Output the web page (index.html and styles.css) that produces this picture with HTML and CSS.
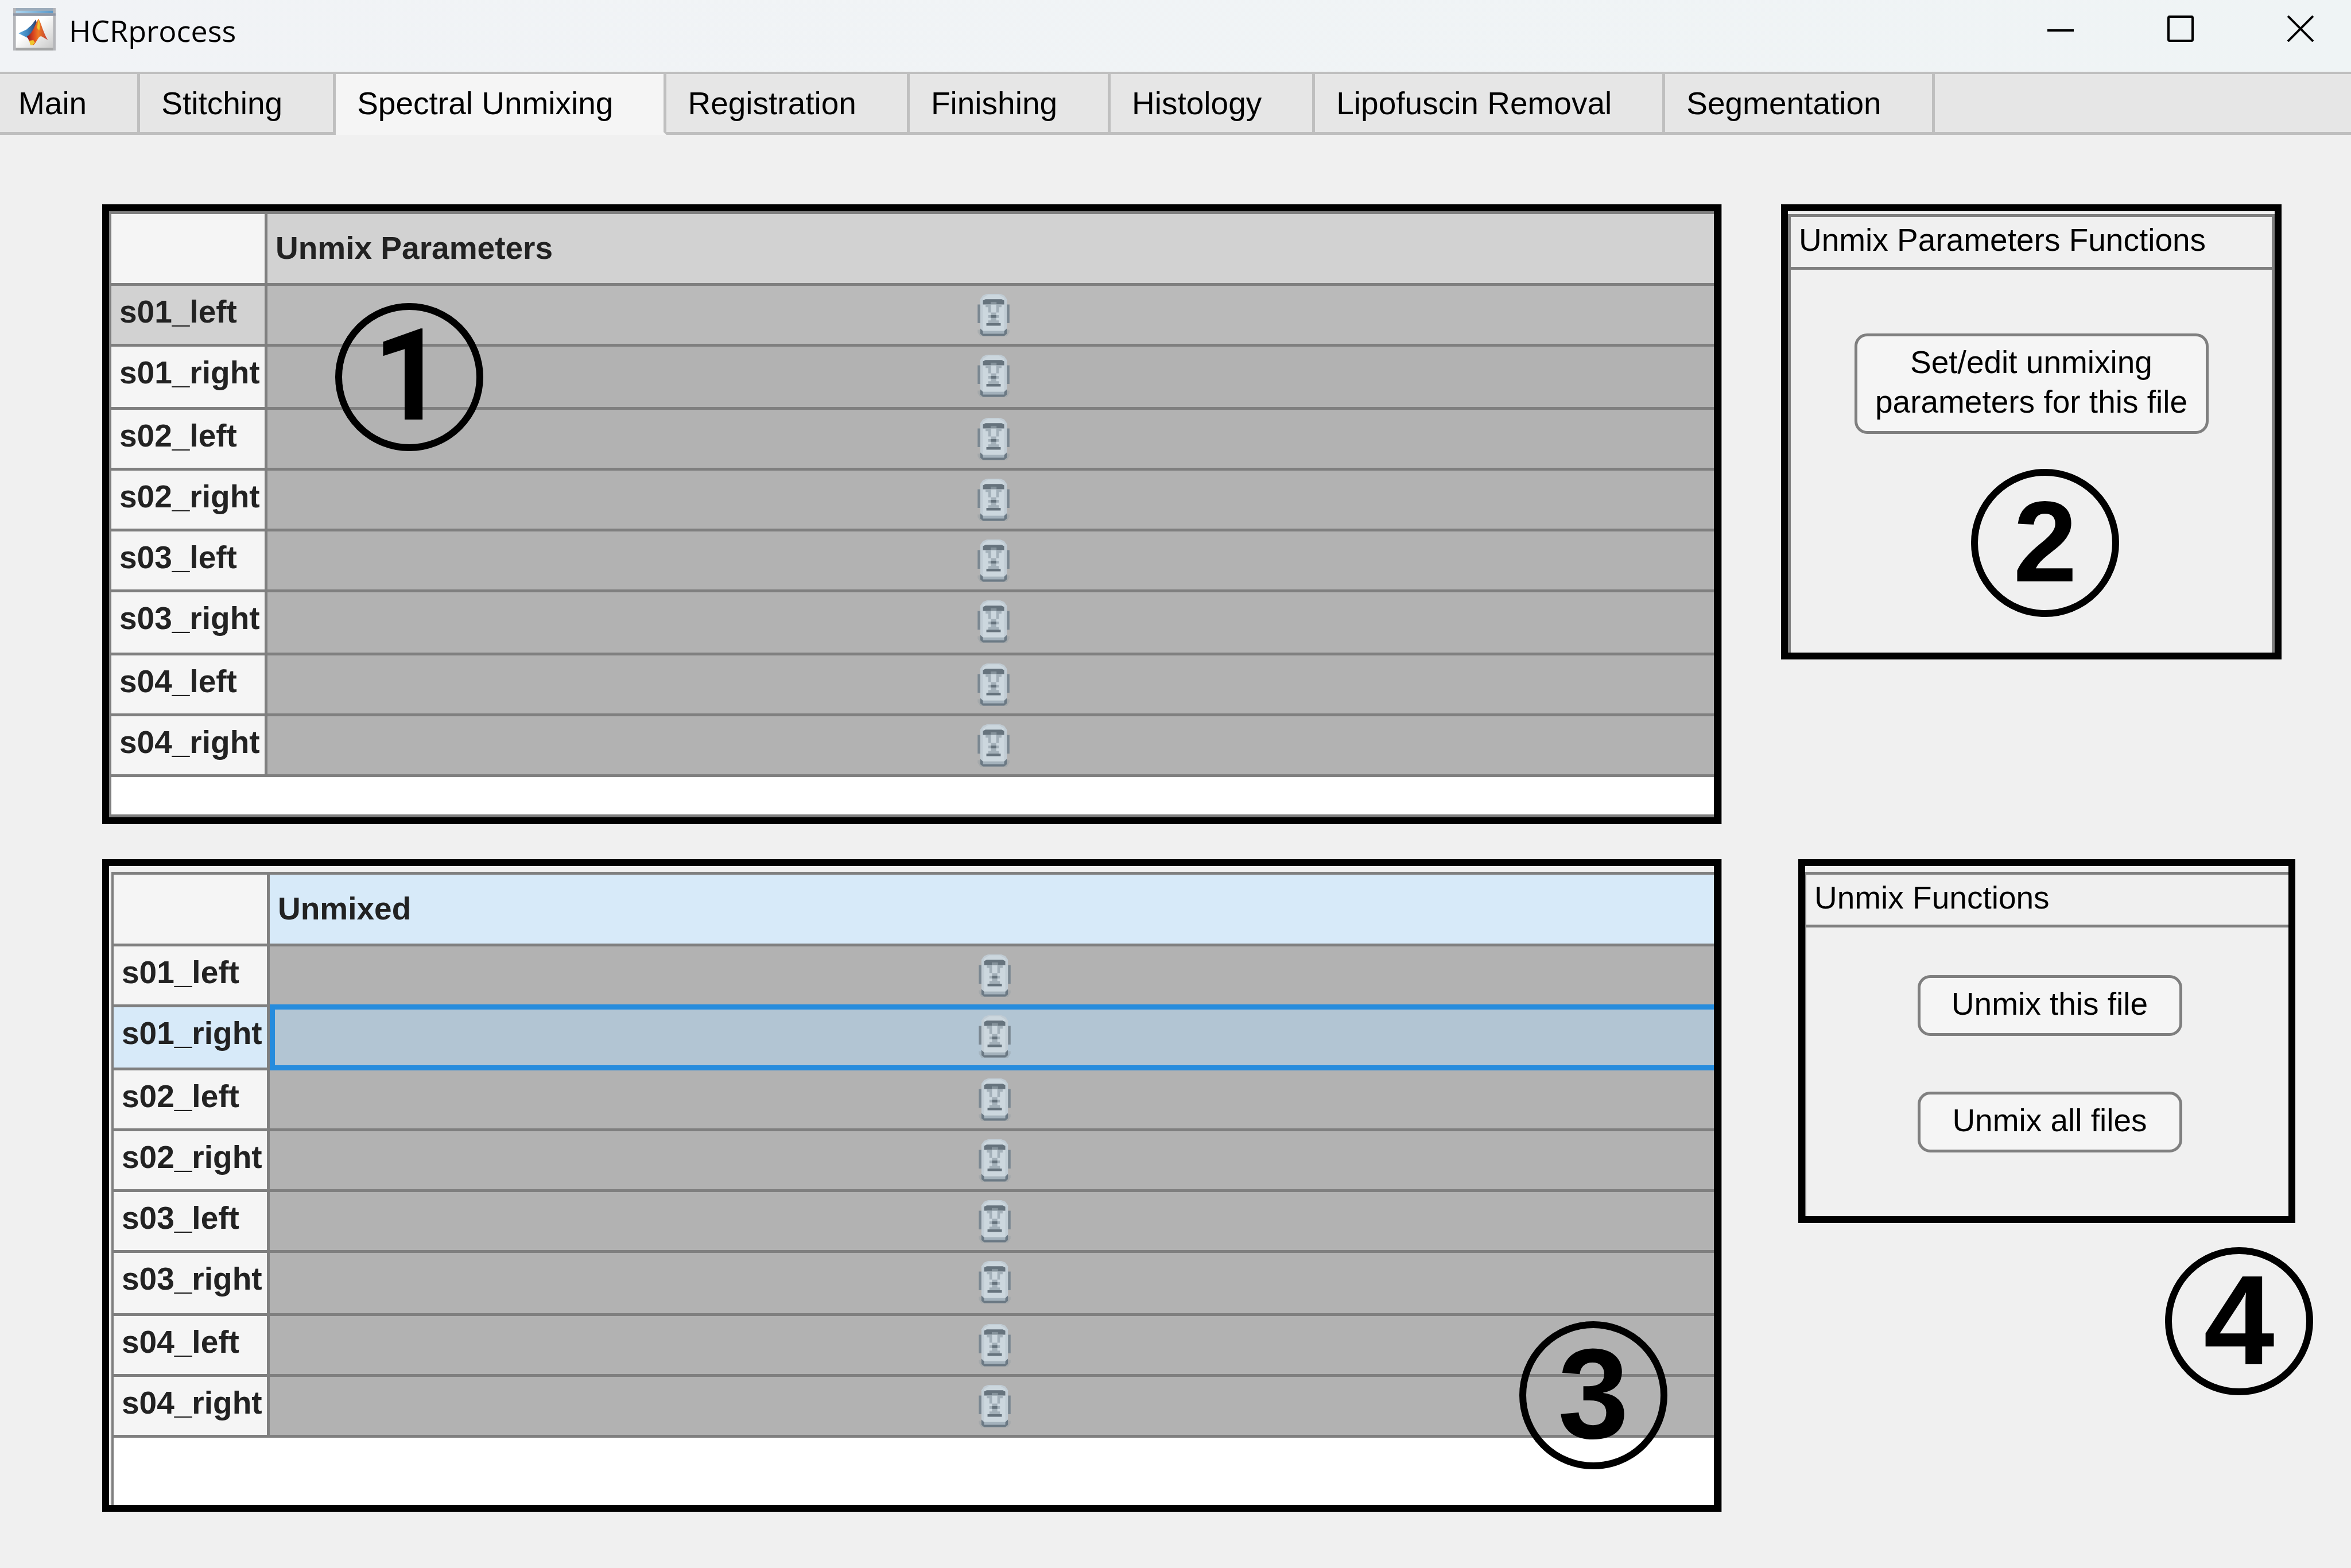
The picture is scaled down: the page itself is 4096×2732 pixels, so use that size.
FILE: index.html
```html
<!DOCTYPE html>
<html lang="en">
<head>
<meta charset="utf-8">
<title>HCRprocess</title>
<link rel="stylesheet" href="styles.css">
</head>
<body>
<svg class="defs" aria-hidden="true">
  <symbol id="moai" viewBox="0 0 12 16">
    <path fill="#7a8791" d="M0 4h1v7H0zM11 4h1v7h-1z"/>
    <path fill="#8c979f" d="M0 13.5h12v1l-1 1.5H1l-1-1.5z" opacity=".35"/>
    <path fill="#6b7984" d="M1 13h10v2l-1 .9H2L1 15z"/>
    <path fill="#c1ccd4" d="M1 2L2 .6 3.500 0h5L10 .6 11 2v11l-1 1H2l-1-1z"/>
    <path fill="#ccd7de" d="M2 1.500L4 .3h4l2 1.200V14H2z"/>
    <path fill="#a4b2bc" d="M2 14h8v1H2z"/>
    <path fill="#66737d" d="M2 2.500L3 2h6l1 .5V4H7V3H5v1H2z"/>
    <path fill="#85929b" d="M5 3h2v1H5z"/>
    <path fill="#a3b0b9" d="M3 4h2v2H4v-1H3zM7 4h2v1H8v2H7zM4 6h1v1H4zM5 7h2v1H5zM4 8h4v1H4zM5 9h2v1h1v1H4v-1h1z"/>
    <path fill="#66737d" d="M5 8h2v1H5zM3.300 11h5.400v1H3.300z"/>
  </symbol>
</svg>

<header class="titlebar">
  <svg class="app-icon" viewBox="0 0 16 16" aria-hidden="true">
    <defs>
      <linearGradient id="bar"><stop offset="0" stop-color="#add6f0"/><stop offset="1" stop-color="#5b98c8"/></linearGradient>
      <linearGradient id="paper" x2="1" y2="1"><stop offset=".4" stop-color="#fff"/><stop offset="1" stop-color="#cacaca"/></linearGradient>
      <linearGradient id="sea"><stop offset="0" stop-color="#5faae0"/><stop offset=".5" stop-color="#3d84bd"/><stop offset="1" stop-color="#303a66"/></linearGradient>
      <linearGradient id="flame"><stop offset="0" stop-color="#8d1820"/><stop offset=".3" stop-color="#d8431f"/><stop offset=".55" stop-color="#ee7a25"/><stop offset="1" stop-color="#bf3a35"/></linearGradient>
    </defs>
    <path fill="#b5b6ba" d="M0 0h16v16H0z"/>
    <path fill="#9cabba" d="M1 0h14v1H1z"/>
    <path fill="url(#bar)" d="M1 1h14v1H1z"/>
    <path fill="#8f97a6" d="M0 2h16v.9H0z"/>
    <path fill="url(#paper)" d="M1 3h14v12H1z"/>
    <path fill="#a4a5a6" d="M1 15h14v1H1z"/>
    <path fill="url(#sea)" d="M2 9.500l3-1.400 2-1.800 1.500-2L9 6l-2 4.500-1.500.8z"/>
    <path fill="url(#flame)" d="M9.500 4c1 1.500 1.700 5 3.500 8l-2.500-1.400c-1.300.2-1.900 3-3 3.400L6 12.300l-.8-1.600C7.500 9.500 8 6.500 9.500 4z"/>
    <path fill="#eec62e" d="M9.400 4.400c.8 1 .8 2.800.4 4.100L9 7.500zM6 12.300l1.600-.2.600.9-.8 1H6.500z"/>
  </svg>
  <h1 class="app-name">HCRprocess</h1>
  <div class="window-controls">
    <button class="control" aria-label="Minimize"><svg viewBox="0 0 46 46"><path d="M0 26h46"/></svg></button>
    <button class="control" aria-label="Maximize"><svg viewBox="0 0 46 46"><rect x="2" y="2" width="42" height="42" rx="2"/></svg></button>
    <button class="control" aria-label="Close"><svg viewBox="0 0 46 46"><path d="M1 1l44 44M45 1L1 45"/></svg></button>
  </div>
</header>

<nav class="tabs" role="tablist">
  <button class="tab" role="tab">Main</button>
  <button class="tab" role="tab">Stitching</button>
  <button class="tab is-active" role="tab" aria-selected="true">Spectral Unmixing</button>
  <button class="tab" role="tab">Registration</button>
  <button class="tab" role="tab">Finishing</button>
  <button class="tab" role="tab">Histology</button>
  <button class="tab" role="tab">Lipofuscin Removal</button>
  <button class="tab" role="tab">Segmentation</button>
</nav>

<main class="workspace">
  <section class="frame frame-table">
    <div class="sheet-parameters">
      <table class="grid">
        <thead><tr><td class="corner"></td><th class="marked" scope="col">Unmix Parameters</th></tr></thead>
        <tbody>
          <tr class="marked-row"><th scope="row">s01_left</th><td><svg class="moai"><use href="#moai"/></svg></td></tr>
          <tr><th scope="row">s01_right</th><td><svg class="moai"><use href="#moai"/></svg></td></tr>
          <tr><th scope="row">s02_left</th><td><svg class="moai"><use href="#moai"/></svg></td></tr>
          <tr><th scope="row">s02_right</th><td><svg class="moai"><use href="#moai"/></svg></td></tr>
          <tr><th scope="row">s03_left</th><td><svg class="moai"><use href="#moai"/></svg></td></tr>
          <tr><th scope="row">s03_right</th><td><svg class="moai"><use href="#moai"/></svg></td></tr>
          <tr><th scope="row">s04_left</th><td><svg class="moai"><use href="#moai"/></svg></td></tr>
          <tr><th scope="row">s04_right</th><td><svg class="moai"><use href="#moai"/></svg></td></tr>
        </tbody>
      </table>
    </div>
    <span class="callout callout-1">1</span>
  </section>

  <section class="frame panel-parameters">
    <div class="group group-closed">
      <h2 class="group-title">Unmix Parameters Functions</h2>
      <div class="group-body">
        <button class="action action-tall">Set/edit unmixing<br>parameters for this file</button>
      </div>
    </div>
    <span class="callout callout-2">2</span>
  </section>

  <section class="frame frame-table">
    <div class="sheet-unmixed">
      <table class="grid">
        <thead><tr><td class="corner"></td><th class="chosen" scope="col">Unmixed</th></tr></thead>
        <tbody>
          <tr><th scope="row">s01_left</th><td><svg class="moai"><use href="#moai"/></svg></td></tr>
          <tr class="chosen-row"><th scope="row">s01_right</th><td><svg class="moai"><use href="#moai"/></svg></td></tr>
          <tr><th scope="row">s02_left</th><td><svg class="moai"><use href="#moai"/></svg></td></tr>
          <tr><th scope="row">s02_right</th><td><svg class="moai"><use href="#moai"/></svg></td></tr>
          <tr><th scope="row">s03_left</th><td><svg class="moai"><use href="#moai"/></svg></td></tr>
          <tr><th scope="row">s03_right</th><td><svg class="moai"><use href="#moai"/></svg></td></tr>
          <tr><th scope="row">s04_left</th><td><svg class="moai"><use href="#moai"/></svg></td></tr>
          <tr><th scope="row">s04_right</th><td><svg class="moai"><use href="#moai"/></svg></td></tr>
        </tbody>
      </table>
    </div>
    <span class="callout callout-3">3</span>
  </section>

  <section class="frame panel-unmix">
    <div class="group group-open">
      <h2 class="group-title">Unmix Functions</h2>
      <div class="group-body">
        <button class="action">Unmix this file</button>
        <button class="action">Unmix all files</button>
      </div>
    </div>
    <span class="callout callout-4">4</span>
  </section>
</main>
</body>
</html>
```

FILE: styles.css
```css
* {
  box-sizing: border-box;
}

body {
  margin: 0;
  background: #f0f0f0;
  color: #000;
  font: 55px/69px "Liberation Sans", Arial, sans-serif;
}

button {
  font: inherit;
  color: inherit;
}

.defs {
  position: absolute;
  width: 0;
  height: 0;
}

/* Title bar */

.titlebar {
  display: flex;
  align-items: flex-start;
  height: 125px;
  padding: 14px 65px 0 23px;
  background: linear-gradient(90deg, #f1f3f6, #eff4f5);
}

.app-icon {
  flex: none;
  width: 74px;
  height: 74px;
}

.app-name {
  flex: 1;
  margin: 0 0 0 23px;
  font: 400 52px/78px "Open Sans", "Noto Sans", sans-serif;
}

.window-controls {
  display: flex;
  gap: 163px;
  padding-top: 13px;
}

.control {
  width: 46px;
  height: 46px;
  padding: 0;
  border: 0;
  background: none;
}

.control svg {
  display: block;
  width: 46px;
  height: 46px;
  fill: none;
  stroke: #000;
  stroke-width: 4px;
}

/* Tabs */

.tabs {
  display: flex;
  border-top: 4px solid #bfbfbf;
  background: #e6e6e6;
  box-shadow: inset 0 -5px #bfbfbf;
}

.tab {
  height: 106px;
  padding: 0 88px 0 37px;
  border: solid #bfbfbf;
  border-width: 0 5px 5px 0;
  background: #e6e6e6;
  line-height: 100px;
  white-space: nowrap;
}

.tab:first-child {
  padding-left: 32px;
}

.tab.is-active {
  border-bottom-color: #f5f5f5;
  background: #f5f5f5;
}

/* Workspace */

.workspace {
  display: grid;
  grid-template-columns: minmax(0, 1fr) 896px;
  gap: 61px 105px;
  align-items: start;
  padding: 121px 97px 97px 178px;
}

.frame {
  position: relative;
  border: 12px solid #000;
}

/* Tables */

.frame-table {
  box-shadow: 2px 0 #7f7f7f;
}

.sheet-parameters {
  padding-bottom: 65px;
  border: solid #7f7f7f;
  border-width: 5px 0 5px 4px;
  background: #fff;
}

.sheet-unmixed {
  margin: 10px 0 0 4px;
  padding-bottom: 117px;
  border: solid #7f7f7f;
  border-width: 5px 0 0 4px;
  background: #fff;
}

.grid {
  width: 100%;
  border-spacing: 0;
  table-layout: fixed;
  color: #222;
}

.grid th,
.grid td {
  height: 106px;
  padding: 0 0 0 10px;
  border-bottom: 5px solid #7f7f7f;
  background: #b2b2b2;
  text-align: center;
  vertical-align: top;
}

.grid th {
  padding-left: 14px;
  background: #f5f5f5;
  font-weight: 700;
  line-height: 90px;
  text-align: left;
  white-space: nowrap;
}

.grid tbody th,
.grid .corner {
  width: 272px;
  border-right: 5px solid #7f7f7f;
  background: #f5f5f5;
}

.grid thead th,
.grid thead td {
  height: 125px;
  line-height: 118px;
}

.grid tbody tr:nth-child(4n+2) > * {
  height: 110px;
}

.grid .marked,
.grid .marked-row th {
  background: #d2d2d2;
}

.grid .marked-row td {
  background: #bababa;
}

.grid .chosen,
.grid .chosen-row th {
  background: #d7eaf9;
}

.grid .chosen-row td {
  position: relative;
  background: #b2c5d3;
}

.chosen-row td::after {
  content: "";
  position: absolute;
  inset: -5px 0;
  border: solid #268cdd;
  border-width: 9px 0 9px 9px;
}

.moai {
  display: block;
  width: 56px;
  height: 74px;
  margin: 14px auto 0;
}

/* Side panels */

.panel-parameters {
  margin-right: 24px;
}

.panel-unmix {
  margin-left: 30px;
}

.group {
  border: solid #7f7f7f;
}

.group-closed {
  margin-top: 5px;
  border-width: 5px 5px 0;
}

.group-open {
  margin-top: 10px;
  border-width: 5px 0 0 2px;
}

.group-title {
  height: 92px;
  margin: 0;
  padding-left: 14px;
  border-bottom: 5px solid #7f7f7f;
  font-size: 55px;
  font-weight: 400;
  line-height: 80px;
}

.group-body {
  display: flex;
  flex-direction: column;
  align-items: center;
}

.group-closed .group-body {
  padding: 111px 0 381px;
}

.group-open .group-body {
  gap: 97px;
  padding: 83px 0 111px 8px;
}

.action {
  width: 461px;
  height: 106px;
  padding: 0 0 6px;
  border: 5px solid #7f7f7f;
  border-radius: 22px;
  background: #f5f5f5;
}

.action-tall {
  width: 617px;
  height: 175px;
}

/* Numbered callouts lying over the panels */

.callout {
  position: absolute;
  width: 258px;
  height: 258px;
  border: 12px solid #000;
  border-radius: 50%;
  font-size: 222px;
  font-weight: 700;
  line-height: 230px;
  text-align: center;
}

.callout-1 {
  top: 160px;
  left: 394px;
  font-family: Roboto, "Liberation Sans", sans-serif;
}

.callout-2 {
  top: 449px;
  left: 319px;
  font-size: 200px;
}

.callout-3 {
  right: 81px;
  bottom: 62px;
}

.callout-4 {
  top: 664px;
  right: -43px;
}
```
